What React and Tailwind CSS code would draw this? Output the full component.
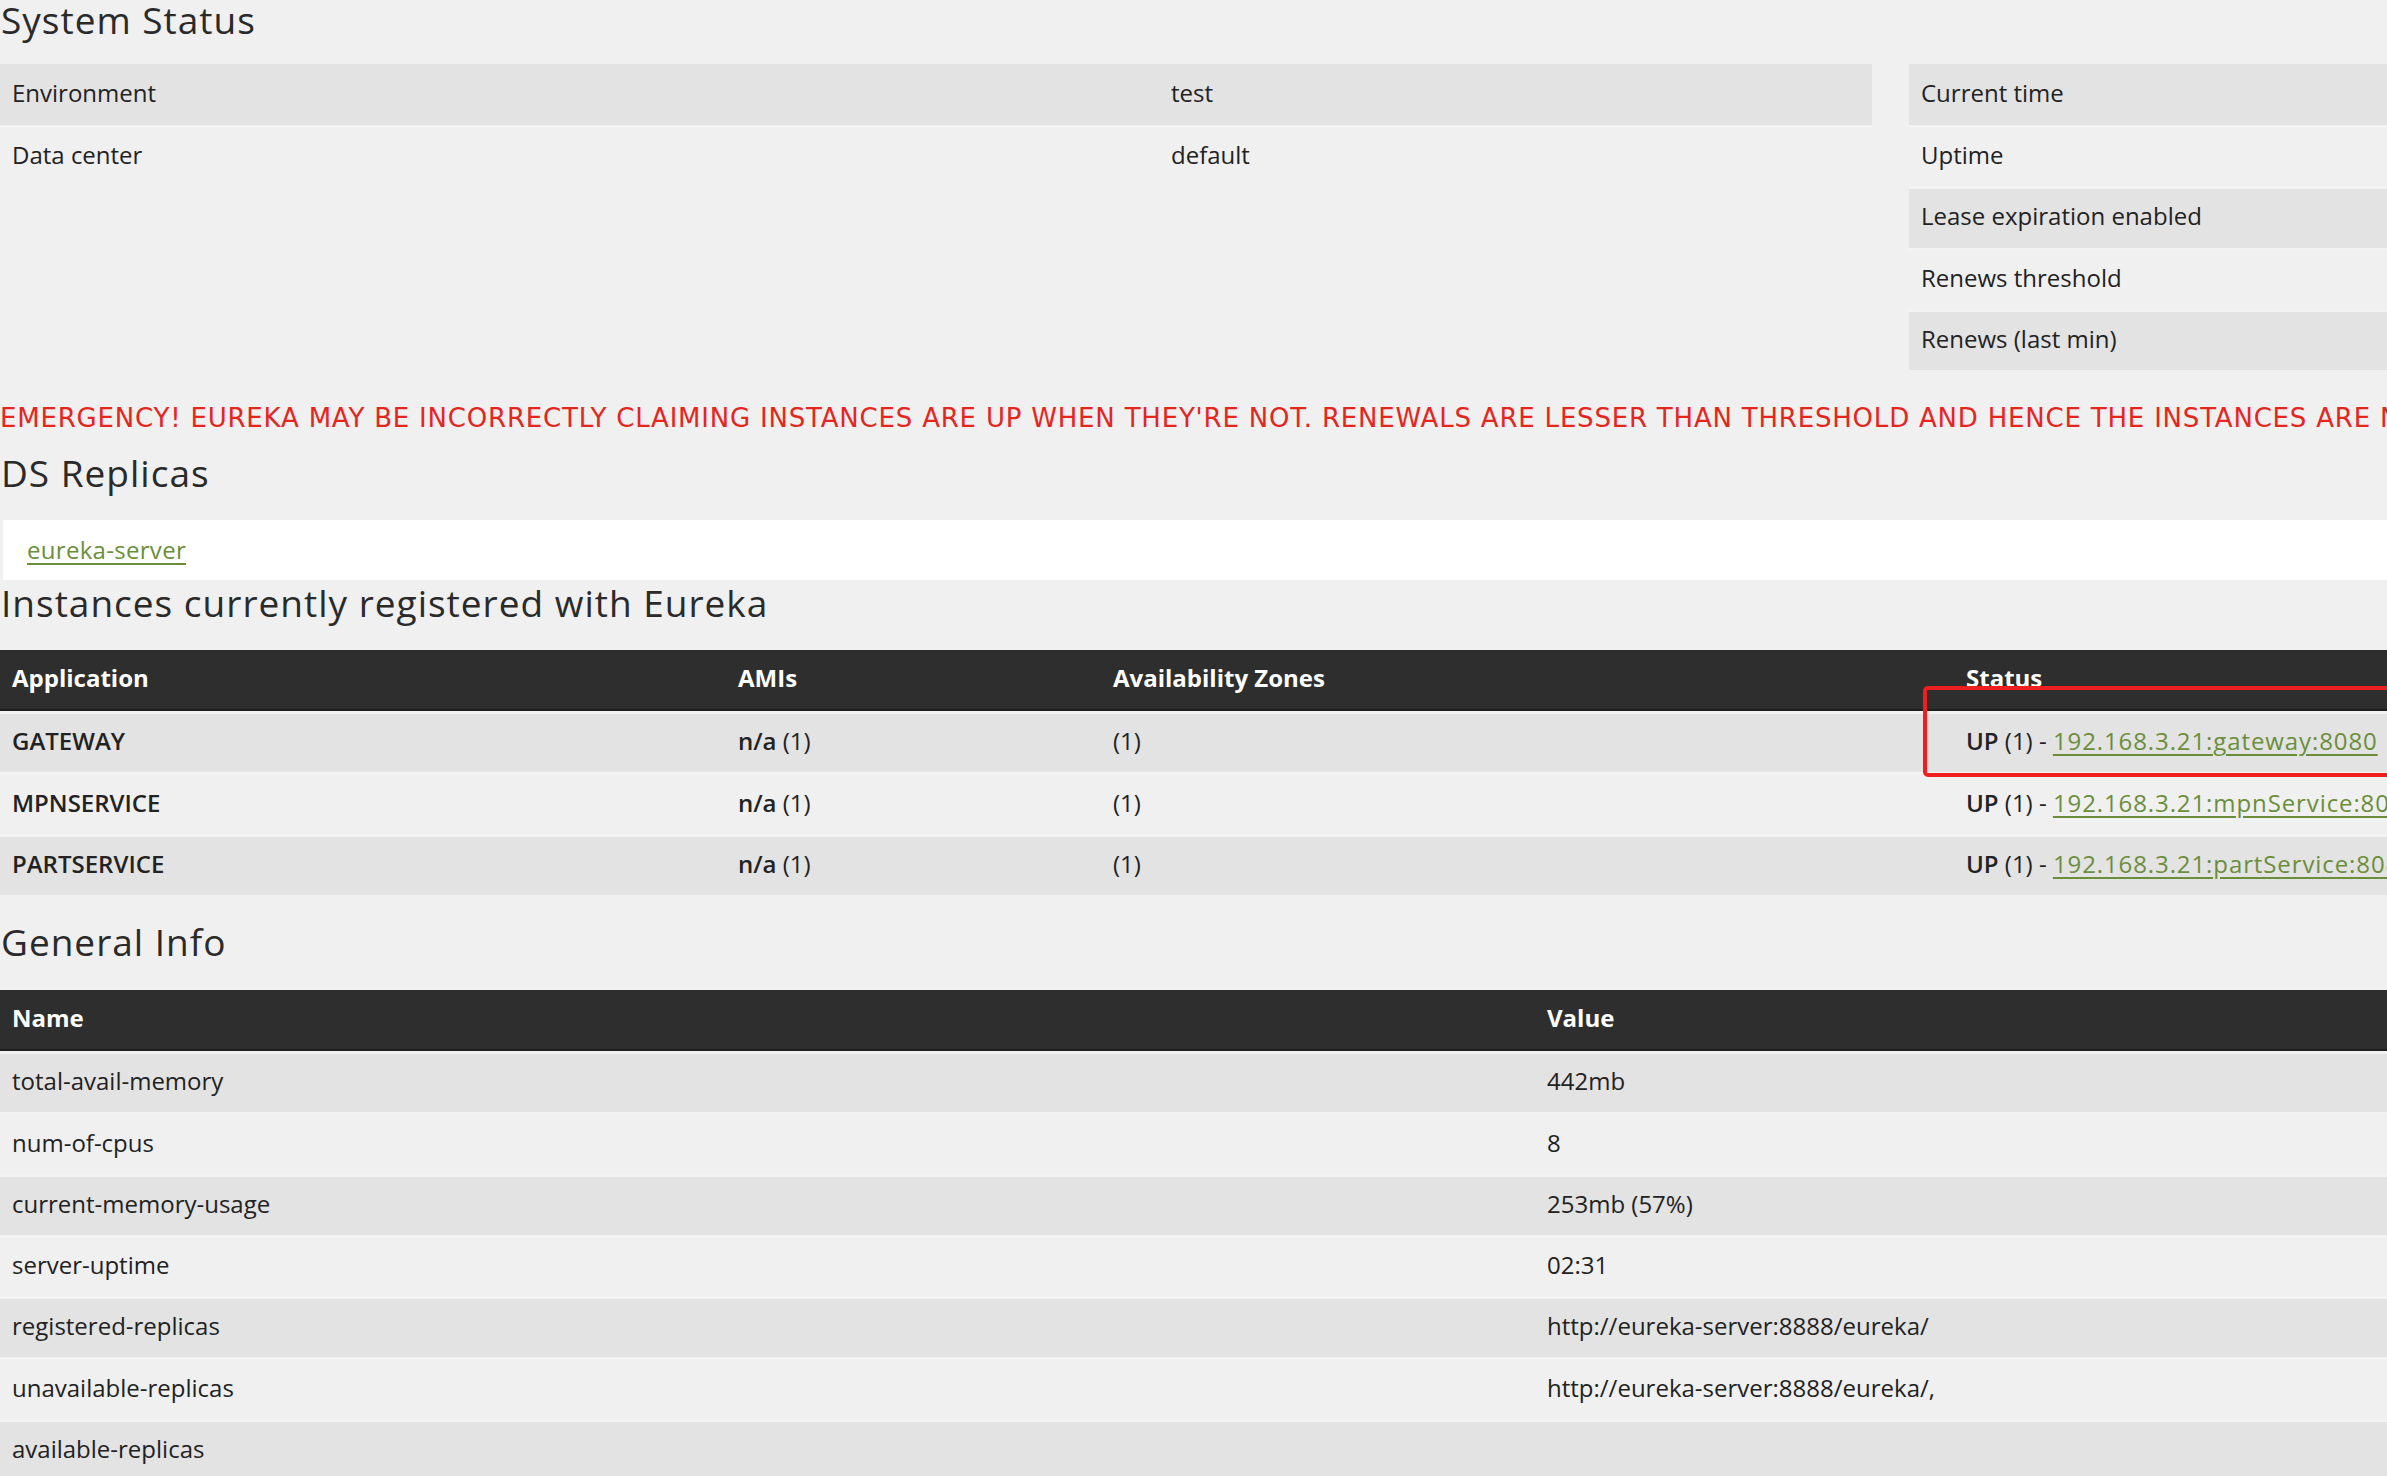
import React from 'react';

const statusRows = [
  ['Environment', 'test'],
  ['Data center', 'default'],
];

const statusRight = [
  'Current time',
  'Uptime',
  'Lease expiration enabled',
  'Renews threshold',
  'Renews (last min)',
];

const instances = [
  { app: 'GATEWAY', url: '192.168.3.21:gateway:8080' },
  { app: 'MPNSERVICE', url: '192.168.3.21:mpnService:8081' },
  { app: 'PARTSERVICE', url: '192.168.3.21:partService:8082' },
];

const generalInfo = [
  ['total-avail-memory', '442mb'],
  ['num-of-cpus', '8'],
  ['current-memory-usage', '253mb (57%)'],
  ['server-uptime', '02:31'],
  ['registered-replicas', 'http://eureka-server:8888/eureka/'],
  ['unavailable-replicas', 'http://eureka-server:8888/eureka/,'],
  ['available-replicas', ''],
];

const rowBg = (i) => (i % 2 === 0 ? 'bg-[#e3e3e3]' : 'bg-[#f0f0f0]');

const Heading = ({ children, className = '' }) => (
  <h2 className={`text-[37px] leading-[40px] tracking-[1px] text-[#2a2a2a] pl-[1px] ${className}`}>{children}</h2>
);

const App = () => {
  return (
    <div className="w-screen h-screen overflow-hidden bg-[#f0f0f0] text-[#222] font-['Open_Sans',sans-serif] text-[24px]">
      <div className="w-[3800px]">
        <Heading>System Status</Heading>

        {/* System status tables */}
        <div className="mt-[24px] flex gap-[37px]">
          <div className="w-[1872px]">
            {statusRows.map(([label, value], i) => (
              <div
                key={label}
                className={`grid grid-cols-[1159px_1fr] items-center h-[61.2px] pb-[4px] border-t-[3px] border-[#f2f2f2] first:border-t-0 ${rowBg(i)}`}
              >
                <div className="px-[12px]">{label}</div>
                <div className="px-[12px]">{value}</div>
              </div>
            ))}
          </div>
          <div className="w-[1872px]">
            {statusRight.map((label, i) => (
              <div
                key={label}
                className={`flex items-center h-[61.2px] pb-[4px] border-t-[3px] border-[#f2f2f2] first:border-t-0 px-[12px] ${rowBg(i)}`}
              >
                {label}
              </div>
            ))}
          </div>
        </div>

        <h4 className="mt-[32px] leading-[32px] text-[26px] tracking-[0.8px] text-[#e5261d] whitespace-nowrap font-['DejaVu_Sans',sans-serif]">
          EMERGENCY! EUREKA MAY BE INCORRECTLY CLAIMING INSTANCES ARE UP WHEN THEY'RE NOT. RENEWALS ARE LESSER THAN THRESHOLD AND HENCE THE INSTANCES ARE NOT BEING EXPIRED JUST TO BE SAFE.
        </h4>

        <Heading className="mt-[19px]">DS Replicas</Heading>
        <div className="mt-[27px] ml-[3px] h-[60px] bg-white flex items-center px-[24px]">
          <a href="#" className="text-[#6b8e3a] underline underline-offset-[4px] tracking-[0.3px]">eureka-server</a>
        </div>

        <Heading className="mt-[3px]">Instances currently registered with Eureka</Heading>
        <div className="relative mt-[27px]">
          <div className="grid grid-cols-[726px_375px_853px_1fr] items-center h-[61.25px] pb-[3px] bg-[#2e2e2e] border-b-[2px] border-[#1e1e1e] text-white font-bold">
            <div className="px-[12px]">Application</div>
            <div className="px-[12px]">AMIs</div>
            <div className="px-[12px]">Availability Zones</div>
            <div className="px-[12px]">Status</div>
          </div>
          {instances.map((row, i) => (
            <div
              key={row.app}
              className={`grid grid-cols-[726px_375px_853px_1fr] items-center h-[61.25px] pb-[4px] border-t-[3px] border-[#f2f2f2] first-of-type:border-t-0 ${rowBg(i)}`}
            >
              <div className="px-[12px] font-semibold">{row.app}</div>
              <div className="px-[12px]">
                <span className="font-semibold">n/a</span> (1)
              </div>
              <div className="px-[12px]">(1)</div>
              <div className="px-[12px] whitespace-nowrap">
                <span className="font-semibold">UP</span> (1) -{' '}
                <a href="#" className="text-[#6b8e3a] underline underline-offset-[4px] tracking-[0.9px]">{row.url}</a>
              </div>
            </div>
          ))}
          {/* annotation box */}
          <div className="absolute left-[1923px] top-[36px] w-[600px] h-[91px] border-[4px] border-[#f01e1e] rounded-[5px]"></div>
        </div>

        <Heading className="mt-[27px]">General Info</Heading>
        <div className="mt-[28px]">
          <div className="grid grid-cols-[1535px_1fr] items-center h-[61.25px] pb-[3px] bg-[#2e2e2e] border-b-[2px] border-[#1e1e1e] text-white font-bold">
            <div className="px-[12px]">Name</div>
            <div className="px-[12px]">Value</div>
          </div>
          {generalInfo.map(([name, value], i) => (
            <div
              key={name}
              className={`grid grid-cols-[1535px_1fr] items-center h-[61.25px] pb-[4px] border-t-[3px] border-[#f2f2f2] first-of-type:border-t-0 ${rowBg(i)}`}
            >
              <div className="px-[12px]">{name}</div>
              <div className="px-[12px]">{value}</div>
            </div>
          ))}
        </div>
      </div>
    </div>
  );
};

export default App;
